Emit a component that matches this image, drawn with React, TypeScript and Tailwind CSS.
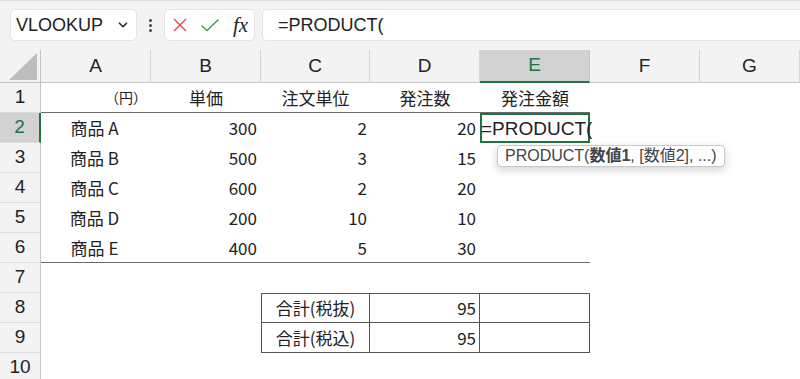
import React from 'react';
import { ChevronDown } from 'lucide-react';

const products = [
  { name: '商品 A', price: 300, unit: 2, qty: 20 },
  { name: '商品 B', price: 500, unit: 3, qty: 15 },
  { name: '商品 C', price: 600, unit: 2, qty: 20 },
  { name: '商品 D', price: 200, unit: 10, qty: 10 },
  { name: '商品 E', price: 400, unit: 5, qty: 30 },
];

const columns = ['A', 'B', 'C', 'D', 'E', 'F', 'G'];

const RowHead: React.FC<{ n: number; active?: boolean }> = ({ n, active }) => (
  <div
    className={`flex items-center justify-center text-[19px] font-['Liberation_Sans',sans-serif] border-b border-[#dcdcdc] ${
      active ? 'bg-[#d2d2d2] text-[#217346] border-r-2 border-r-[#217346]' : 'bg-[#f3f3f3] text-[#222] border-r border-r-[#c6c6c6]'
    }`}
  >
    {n}
  </div>
);

const Blank: React.FC<{ count: number }> = ({ count }) => (
  <>
    {Array.from({ length: count }).map((_, i) => (
      <div key={i} />
    ))}
  </>
);

const App: React.FC = () => {
  return (
    <div className="w-[800px] h-[379px] overflow-hidden bg-white text-[#222] font-['Noto_Sans_CJK_JP',sans-serif]">
      {/* formula bar */}
      <div className="h-[50px] bg-[#f3f3f3] border-t border-[#dedede] flex items-start pt-[8px] pl-[10px] font-['Liberation_Sans','Noto_Sans_CJK_JP',sans-serif]">
        <div className="w-[127px] h-[32px] bg-white rounded-[5px] border border-[#e4e4e4] flex items-center justify-between pl-[5px] pr-[6px]">
          <span className="text-[18px] leading-none">VLOOKUP</span>
          <ChevronDown size={14} strokeWidth={3} className="text-[#333]" />
        </div>
        <div className="w-[27px] h-[32px] flex flex-col items-center justify-center gap-[2px]">
          <span className="w-[3px] h-[3px] rounded-full bg-[#444]" />
          <span className="w-[3px] h-[3px] rounded-full bg-[#444]" />
          <span className="w-[3px] h-[3px] rounded-full bg-[#444]" />
        </div>
        <div className="w-[91px] h-[32px] bg-white rounded-[5px] border border-[#e4e4e4] flex items-center pl-[7px] gap-[12px]">
          <svg width="16" height="16" viewBox="0 0 16 16">
            <path d="M2 2 L14 14 M14 2 L2 14" stroke="#e5434b" strokeWidth="1.3" fill="none" />
          </svg>
          <svg width="20" height="16" viewBox="0 0 20 16">
            <path d="M1.5 8.5 L7 13.5 L18.5 2.5" stroke="#3e9e4f" strokeWidth="1.4" fill="none" />
          </svg>
          <span className="text-[21px] italic leading-none ml-[1px] font-['Liberation_Serif',serif]">fx</span>
        </div>
        <div className="flex-1 h-[32px] ml-[7px] bg-white rounded-l-[5px] border border-r-0 border-[#e4e4e4] flex items-center pl-[15px]">
          <span className="text-[18px] leading-none">=PRODUCT(</span>
        </div>
      </div>

      {/* sheet */}
      <div className="grid grid-cols-[41px_110px_110px_109px_110px_110px_110px_1fr] grid-rows-[33px_repeat(10,30px)] text-[17px]">
        {/* column headers */}
        <div className="bg-[#f3f3f3] border-r border-b border-[#c6c6c6] flex items-end justify-end pr-[3px] pb-[2px]">
          <svg width="28" height="27" viewBox="0 0 28 27">
            <path d="M28 0 L28 27 L0 27 Z" fill="#bdbdbd" />
          </svg>
        </div>
        {columns.map((c) =>
          c === 'E' ? (
            <div
              key={c}
              className="bg-[#d2d2d2] border-r border-[#c6c6c6] border-b-2 border-b-[#217346] flex items-center justify-center text-[19px] text-[#217346] font-['Liberation_Sans',sans-serif]"
            >
              {c}
            </div>
          ) : (
            <div
              key={c}
              className="bg-[#f3f3f3] border-r border-[#d4d4d4] border-b border-b-[#c6c6c6] flex items-center justify-center text-[19px] font-['Liberation_Sans',sans-serif]"
            >
              {c}
            </div>
          )
        )}

        {/* row 1 */}
        <RowHead n={1} />
        <div className="border-b border-[#6a6a6a] flex items-center justify-end pr-[4px] text-[14px]">（円）</div>
        <div className="border-b border-[#6a6a6a] flex items-center justify-center">単価</div>
        <div className="border-b border-[#6a6a6a] flex items-center justify-center">注文単位</div>
        <div className="border-b border-[#6a6a6a] flex items-center justify-center">発注数</div>
        <div className="border-b border-[#6a6a6a] flex items-center justify-center">発注金額</div>
        <Blank count={2} />

        {/* rows 2-6 */}
        {products.map((p, i) => {
          const last = i === products.length - 1;
          const b = last ? 'border-b border-[#6a6a6a]' : '';
          return (
            <React.Fragment key={p.name}>
              <RowHead n={i + 2} active={i === 0} />
              <div className={`flex items-center justify-center pr-[3px] ${b}`}>{p.name}</div>
              <div className={`flex items-center justify-end pr-[4px] ${b}`}>{p.price}</div>
              <div className={`flex items-center justify-end pr-[3px] ${b}`}>{p.unit}</div>
              <div className={`flex items-center justify-end pr-[4px] ${b}`}>{p.qty}</div>
              {i === 0 ? (
                <div className="relative z-10">
                  <div className="absolute inset-0 border-2 border-[#217346]" />
                  <div className="absolute left-[1px] top-0 h-full flex items-center whitespace-nowrap text-[19px] leading-none font-['Liberation_Sans',sans-serif]">
                    =PRODUCT(
                  </div>
                  <div className="absolute left-[17px] top-[32px] h-[22px] px-[7px] bg-white border border-[#c9c9c9] rounded-[4px] shadow-[0_3px_8px_rgba(0,0,0,0.18)] flex items-center whitespace-nowrap text-[16px] leading-none text-[#444] font-['Liberation_Sans','Noto_Sans_CJK_JP',sans-serif]">
                    PRODUCT(<span className="font-bold">数値1</span>, [数値2], ...)
                  </div>
                </div>
              ) : (
                <div className={b} />
              )}
              <Blank count={2} />
            </React.Fragment>
          );
        })}

        {/* row 7 */}
        <RowHead n={7} />
        <Blank count={7} />

        {/* row 8 */}
        <RowHead n={8} />
        <Blank count={2} />
        <div className="border border-[#555] flex items-center justify-center">合計(税抜)</div>
        <div className="border-y border-r border-[#555] flex items-center justify-end pr-[3px]">95</div>
        <div className="border-y border-r border-[#555]" />
        <Blank count={2} />

        {/* row 9 */}
        <RowHead n={9} />
        <Blank count={2} />
        <div className="border-x border-b border-[#555] flex items-center justify-center">合計(税込)</div>
        <div className="border-r border-b border-[#555] flex items-center justify-end pr-[3px]">95</div>
        <div className="border-r border-b border-[#555]" />
        <Blank count={2} />

        {/* row 10 */}
        <RowHead n={10} />
        <Blank count={7} />
      </div>
    </div>
  );
};

export default App;
